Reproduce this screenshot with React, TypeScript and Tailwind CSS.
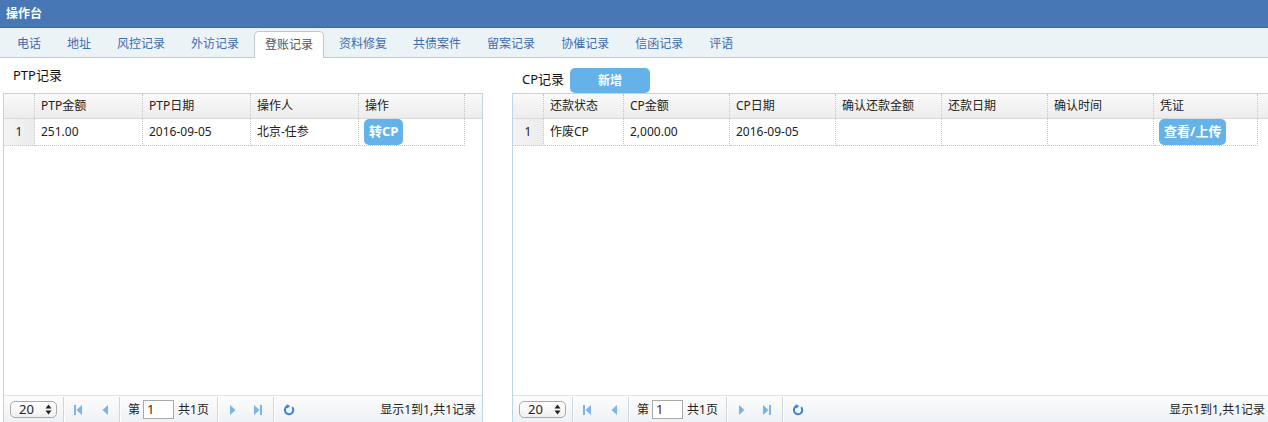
import React from 'react';

const FONT = { fontFamily: '"Noto Sans", "Noto Sans CJK SC", sans-serif' };

const tabs = ['电话', '地址', '风控记录', '外访记录', '登账记录', '资料修复', '共债案件', '留案记录', '协催记录', '信函记录', '评语'];

type Col = { title: string; w: number };

function FirstIcon() {
  return (
    <svg width="10" height="12" viewBox="0 0 10 12">
      <rect x="1" y="1" width="2" height="10" fill="#7eb3e6" />
      <path d="M9 1 L3.5 6 L9 11 Z" fill="#7eb3e6" />
    </svg>
  );
}
function PrevIcon() {
  return (
    <svg width="8" height="12" viewBox="0 0 8 12">
      <path d="M7 1 L1.5 6 L7 11 Z" fill="#7eb3e6" />
    </svg>
  );
}
function NextIcon() {
  return (
    <svg width="8" height="12" viewBox="0 0 8 12">
      <path d="M1 1 L6.5 6 L1 11 Z" fill="#7eb3e6" />
    </svg>
  );
}
function LastIcon() {
  return (
    <svg width="10" height="12" viewBox="0 0 10 12">
      <path d="M1 1 L6.5 6 L1 11 Z" fill="#7eb3e6" />
      <rect x="7" y="1" width="2" height="10" fill="#7eb3e6" />
    </svg>
  );
}
function RefreshIcon() {
  return (
    <svg width="12" height="12" viewBox="0 0 12 12">
      <path d="M9.2 3.2 A4.2 4.2 0 1 1 4.8 2" fill="none" stroke="#3a83cf" strokeWidth="2" />
      <path d="M3.6 0.2 L7.2 1.9 L4.2 4.4 Z" fill="#3a83cf" />
    </svg>
  );
}

// thin grooved divider between pager groups
function Sep({ className = '' }: { className?: string }) {
  return <div className={`w-[2px] h-[26px] border-l border-[#cfd6db] border-r border-r-white shrink-0 ${className}`} />;
}

function Pager() {
  return (
    <div className="h-[28px] flex items-center border-t border-[#dde3e7] bg-gradient-to-b from-[#fbfcfd] to-[#eef2f5] text-[12px] text-[#222] pl-[6px] pr-[6px]">
      <div className="w-[47px] h-[17px] shrink-0 rounded-[5px] border border-[#aaa] bg-gradient-to-b from-white to-[#f0f0f0] flex items-center justify-between pl-[8px] pr-[4px] text-[13px] leading-none">
        <span>20</span>
        <svg width="7" height="11" viewBox="0 0 7 11">
          <path d="M3.5 0.5 L6.5 4.5 L0.5 4.5 Z" fill="#222" />
          <path d="M3.5 10.5 L6.5 6.5 L0.5 6.5 Z" fill="#222" />
        </svg>
      </div>
      <Sep className="ml-[6px]" />
      <div className="w-[22px] flex justify-center ml-[2px]"><FirstIcon /></div>
      <div className="w-[22px] flex justify-center ml-[5px]"><PrevIcon /></div>
      <Sep className="ml-[3px]" />
      <span className="ml-[7px]">第</span>
      <div className="w-[31px] h-[19px] border border-[#a9a9a9] bg-white text-[#5a1a00] text-[13px] leading-[17px] pl-[3px] ml-[3px]">1</div>
      <span className="ml-[4px]">共1页</span>
      <Sep className="ml-[8px]" />
      <div className="w-[22px] flex justify-center ml-[3px]"><NextIcon /></div>
      <div className="w-[22px] flex justify-center ml-[3px]"><LastIcon /></div>
      <Sep className="ml-[4px]" />
      <div className="w-[22px] flex justify-center ml-[3px]"><RefreshIcon /></div>
      <span className="ml-auto">显示1到1,共1记录</span>
    </div>
  );
}

function Grid({ cols, row, action, width }: { cols: Col[]; row: string[]; action: string; width: string }) {
  return (
    <div className={`${width} h-[331px] border border-[#bcd6e4] flex flex-col bg-white overflow-hidden`}>
      <div className="flex h-[25px] border-b border-[#d9d9d9] bg-gradient-to-b from-[#fafafa] to-[#ececec] text-[12px] text-[#222]">
        <div className="w-[31px] shrink-0 border-r border-dotted border-[#c8c8c8]" />
        {cols.map((c) => (
          <div key={c.title} style={{ width: c.w }} className="shrink-0 border-r border-dotted border-[#c8c8c8] pl-[6px] flex items-center">
            {c.title}
          </div>
        ))}
      </div>
      <div className="flex h-[27px] text-[12px] text-[#222]">
        <div className="w-[31px] shrink-0 border-r border-b border-dotted border-[#c8c8c8] bg-gradient-to-r from-[#f4f4f4] to-[#ececec] flex items-center justify-center">1</div>
        {cols.map((c, i) => (
          <div key={c.title} style={{ width: c.w }} className="shrink-0 border-r border-b border-dotted border-[#c8c8c8] pl-[6px] flex items-center">
            {i === cols.length - 1 ? (
              <span className="h-[26px] px-[5px] rounded-[5px] bg-[#64b2e8] text-white font-bold text-[13px] flex items-center -ml-[1px] -mt-[1px]">{action}</span>
            ) : (
              row[i]
            )}
          </div>
        ))}
      </div>
      <div className="flex-1" />
      <Pager />
    </div>
  );
}

export default function App() {
  const left: Col[] = [
    { title: 'PTP金额', w: 108 },
    { title: 'PTP日期', w: 108 },
    { title: '操作人', w: 108 },
    { title: '操作', w: 106 },
  ];
  const right: Col[] = [
    { title: '还款状态', w: 80 },
    { title: 'CP金额', w: 106 },
    { title: 'CP日期', w: 106 },
    { title: '确认还款金额', w: 106 },
    { title: '还款日期', w: 106 },
    { title: '确认时间', w: 106 },
    { title: '凭证', w: 104 },
  ];
  return (
    <div className="w-[1268px] h-[422px] overflow-hidden bg-white" style={FONT}>
      <div className="h-[28px] bg-[#4777b4] text-white font-bold text-[12px] flex items-center pl-[6px] border-b border-[#3f6aa3]">操作台</div>
      <div className="h-[30px] bg-[#ecf3f7] border-b border-[#c3c7ca] flex items-end pl-[4px]">
        {tabs.map((t) =>
          t === '登账记录' ? (
            <div key={t} className="h-[27px] px-[10px] mx-[2px] -mb-px bg-white border border-b-0 border-[#c3c7ca] rounded-t-[5px] text-[12px] text-[#555] flex items-center">
              {t}
            </div>
          ) : (
            <div key={t} className="h-[27px] px-[13px] text-[12px] text-[#3d6bb0] flex items-center">
              {t}
            </div>
          )
        )}
      </div>
      <div className="flex pl-[3px]">
        <div className="w-[479px] shrink-0 flex flex-col">
          <div className="h-[35px] flex items-center pl-[10px] text-[13px] text-[#111]">PTP记录</div>
          <Grid cols={left} row={['251.00', '2016-09-05', '北京-任参']} action="转CP" width="w-[480px]" />
        </div>
        <div className="ml-[30px] w-[760px] shrink-0 flex flex-col">
          <div className="h-[35px] flex items-end pl-[10px] text-[13px] text-[#111]">
            <span className="mb-[4px]">CP记录</span>
            <div className="ml-[6px] w-[80px] h-[25px] rounded-[5px] bg-[#64b2e8] text-white font-bold text-[12px] flex items-center justify-center">新增</div>
          </div>
          <Grid cols={right} row={['作废CP', '2,000.00', '2016-09-05', '', '', '']} action="查看/上传" width="w-[760px]" />
        </div>
      </div>
    </div>
  );
}
